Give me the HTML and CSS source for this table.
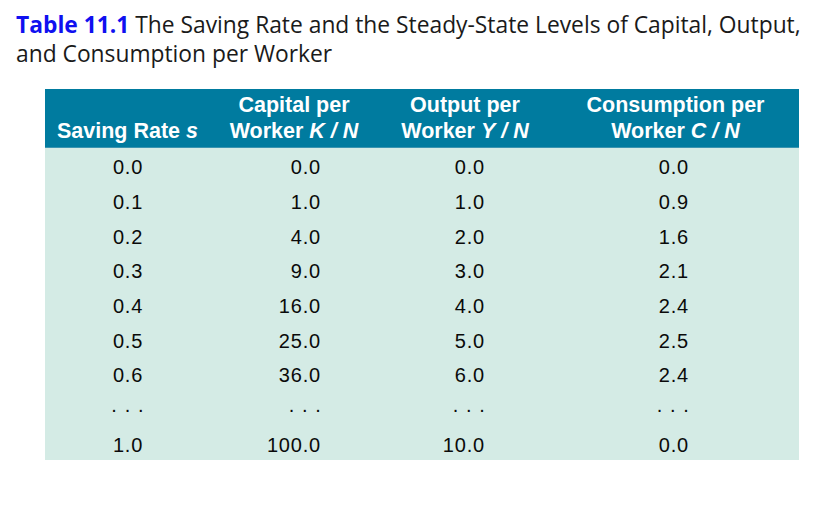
FILE: index.html
```html
<!DOCTYPE html>
<html lang="en">
<head>
<meta charset="utf-8">
<title>Table 11.1</title>
<link rel="stylesheet" href="styles.css">
</head>
<body>
<div class="page">
  <p class="caption"><span class="label">Table 11.1</span> The Saving Rate and the Steady-State Levels of Capital, Output,<br>and Consumption per Worker</p>
  <div class="table">
    <div class="th c1"><span>Saving Rate <i>s</i></span></div>
    <div class="th c2"><span>Capital per<br>Worker <i>K</i> <i>/</i> <i>N</i></span></div>
    <div class="th c3"><span>Output per<br>Worker <i>Y</i> <i>/</i> <i>N</i></span></div>
    <div class="th c4"><span>Consumption per<br>Worker <i>C</i> <i>/</i> <i>N</i></span></div>

    <div class="td c1">0.0</div><div class="td c2">0.0</div><div class="td c3">0.0</div><div class="td c4">0.0</div>
    <div class="td c1">0.1</div><div class="td c2">1.0</div><div class="td c3">1.0</div><div class="td c4">0.9</div>
    <div class="td c1">0.2</div><div class="td c2">4.0</div><div class="td c3">2.0</div><div class="td c4">1.6</div>
    <div class="td c1">0.3</div><div class="td c2">9.0</div><div class="td c3">3.0</div><div class="td c4">2.1</div>
    <div class="td c1">0.4</div><div class="td c2">16.0</div><div class="td c3">4.0</div><div class="td c4">2.4</div>
    <div class="td c1">0.5</div><div class="td c2">25.0</div><div class="td c3">5.0</div><div class="td c4">2.5</div>
    <div class="td c1">0.6</div><div class="td c2">36.0</div><div class="td c3">6.0</div><div class="td c4">2.4</div>
    <div class="td c1 dots">. . .</div><div class="td c2 dots">. . .</div><div class="td c3 dots">. . .</div><div class="td c4 dots">. . .</div>
    <div class="td c1">1.0</div><div class="td c2">100.0</div><div class="td c3">10.0</div><div class="td c4">0.0</div>
  </div>
</div>
</body>
</html>
```
FILE: styles.css
```css
html, body {
  margin: 0;
  padding: 0;
  background: #ffffff;
}
.page {
  width: 838px;
  height: 506px;
  box-sizing: border-box;
  padding: 10px 0 0 16px;
}
.caption {
  margin: 0;
  font-family: "Open Sans", "DejaVu Sans", sans-serif;
  font-size: 22.8px;
  line-height: 29px;
  color: #1a1a1a;
}
.label {
  color: #1010f0;
  font-weight: bold;
}
.table {
  margin: 21px 0 0 29px;
  width: 754px;
  display: grid;
  grid-template-columns: 165px 168px 174px 247px;
  grid-template-rows: 59px repeat(9, 34.67px);
  background: #d4ebe5;
  font-family: "Liberation Sans", Arial, sans-serif;
}
.th {
  background: #007b9f;
  color: #ffffff;
  font-weight: bold;
  font-size: 21.5px;
  line-height: 26px;
  display: flex;
  align-items: flex-end;
  justify-content: center;
  text-align: center;
  padding-bottom: 3px;
  box-sizing: border-box;
  border-bottom: 1px solid #3a94b0;
}
.td {
  font-size: 20px;
  letter-spacing: 0.8px;
  color: #0a0a0a;
  display: flex;
  align-items: center;
  padding-top: 5px;
  box-sizing: border-box;
}
.td.c1 { justify-content: center; padding-left: 1px; }
.td.c2 { justify-content: flex-end; padding-right: 57px; }
.td.c3 { justify-content: flex-end; padding-right: 67px; }
.td.c4 { justify-content: flex-end; padding-right: 110px; }
.td.dots { padding-top: 0; padding-bottom: 4px; letter-spacing: 1.1px; }
.td.c2.dots { padding-right: 56px; }
.td.c3.dots { padding-right: 66px; }
.td.c4.dots { padding-right: 109px; }
```
